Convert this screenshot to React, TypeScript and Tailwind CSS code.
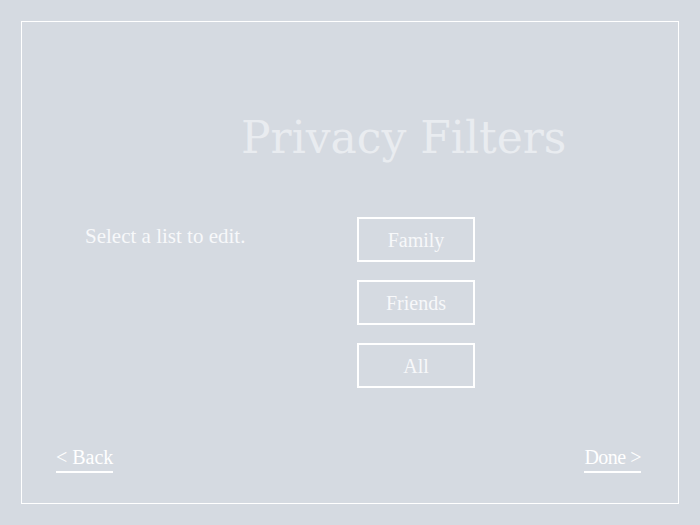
const lists = ["Family", "Friends", "All"];

export default function App() {
  return (
    <div className="h-[525px] w-[700px] bg-[#d5dae1] p-[21px] font-['Liberation_Serif',serif] text-white">
      <div className="flex h-full flex-col border border-white">
        <h1 className="ml-[219px] mt-[94px] font-['DejaVu_Serif',serif] text-[44px] leading-[44px] text-[#e9ecf0]">Privacy Filters</h1>

        <div className="mt-[57px] flex">
          <p className="w-[335px] pl-[63px] pt-[7px] text-[21px] leading-[24px] text-[#f7f8fa]">Select a list to edit.</p>
          <div className="flex flex-col gap-[18px]">
            {lists.map((name) => (
              <button key={name} className="flex h-[45px] w-[118px] items-center justify-center border-2 border-white text-[20px] text-[#f7f8fa]">{name}</button>
            ))}
          </div>
        </div>

        <div className="mb-[30px] mt-auto flex items-end justify-between pl-[34px] pr-[37px]">
          <a href="#" className="border-b-2 border-white pb-[2px] text-[20px] leading-[23px]">&lt; Back</a>
          <a href="#" className="border-b-2 border-white pb-[2px] text-[20px] leading-[23px] tracking-[-0.5px]">Done &gt;</a>
        </div>
      </div>
    </div>
  );
}
